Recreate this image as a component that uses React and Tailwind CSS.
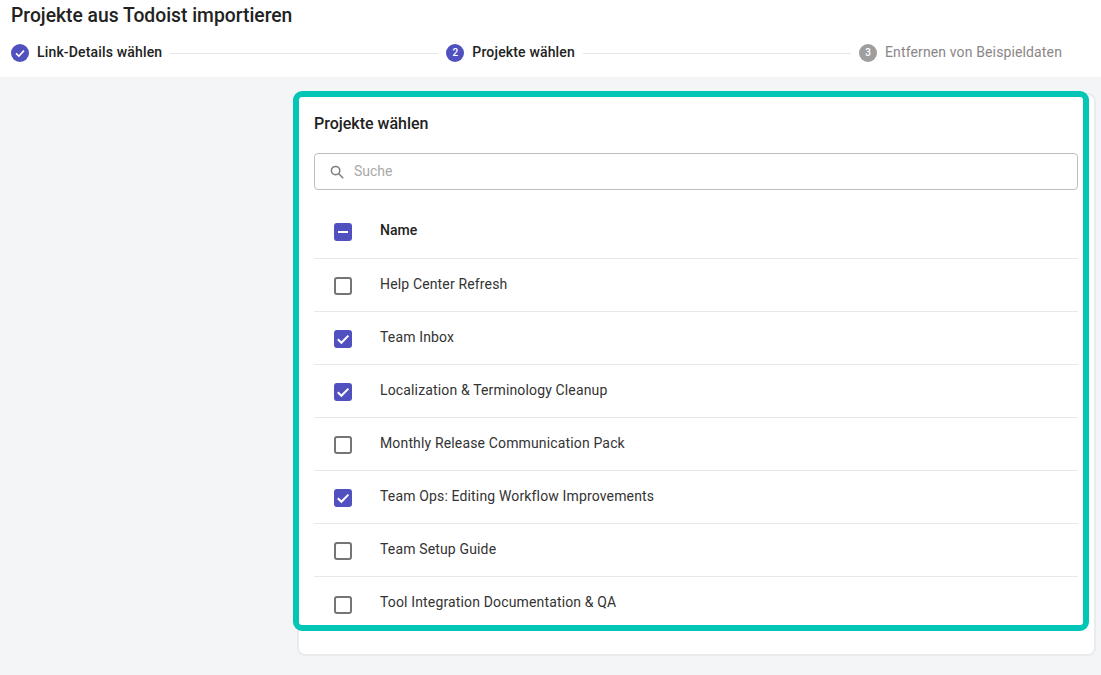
import React from "react";

function CheckMark() {
  return (
    <svg viewBox="0 0 18 18" className="w-[18px] h-[18px]" fill="none">
      <path d="M3.8 9.2 L7.4 12.8 L14.4 5.6" stroke="#fff" strokeWidth="2" />
    </svg>
  );
}

function Box({ state }) {
  if (state === "off") {
    return <span className="block w-[18px] h-[18px] rounded-[3px] border-2 border-[#757575] bg-white shrink-0 mt-[2px]" />;
  }
  return (
    <span className="flex items-center justify-center w-[18px] h-[18px] rounded-[3px] bg-[#5051bf] shrink-0 mt-[2px]">
      {state === "on" ? <CheckMark /> : <span className="block w-[10px] h-[2px] bg-white" />}
    </span>
  );
}

function Step({ icon, label, muted, bold }) {
  return (
    <div className="flex items-center gap-2 shrink-0">
      <span className={`flex items-center justify-center w-[18px] h-[18px] rounded-full text-white text-[10px] font-medium leading-none ${muted ? "bg-[#9e9e9e]" : "bg-[#5051bf]"}`}>
        {icon}
      </span>
      <span className={`text-[14px] leading-5 mb-[2px] ${muted ? "tracking-[0.13px] text-[#8a8686] font-normal" : "tracking-[0.16px] text-[#222222]"} ${bold ? "font-medium" : ""}`}>{label}</span>
    </div>
  );
}

const rows = [
  ["Help Center Refresh", "off"],
  ["Team Inbox", "on"],
  ["Localization & Terminology Cleanup", "on"],
  ["Monthly Release Communication Pack", "off"],
  ["Team Ops: Editing Workflow Improvements", "on"],
  ["Team Setup Guide", "off"],
  ["Tool Integration Documentation & QA", "off"],
];

export default function App() {
  return (
    <div className="relative w-[1101px] h-[675px] overflow-hidden bg-[#f4f5f7] font-['Roboto',sans-serif]">
      <header className="h-[77px] bg-white pl-[11px] pr-[39px] pt-[4px]">
        <h1 className="text-[19.3px] leading-[24px] font-medium text-[#222222]">Projekte aus Todoist importieren</h1>
        <div className="flex items-center gap-2 mt-[14px]">
          <Step
            bold
            label="Link-Details wählen"
            icon={
              <svg viewBox="0 0 18 18" className="w-[18px] h-[18px]" fill="none">
                <path d="M5 9.3 L7.9 12 L13 6.6" stroke="#fff" strokeWidth="1.6" />
              </svg>
            }
          />
          <div className="flex-1 h-px bg-[#e6e6e8] mt-px" />
          <Step bold label="Projekte wählen" icon="2" />
          <div className="flex-1 h-px bg-[#e6e6e8] mt-px" />
          <Step muted label="Entfernen von Beispieldaten" icon="3" />
        </div>
      </header>

      <main className="flex pl-[297px] pr-[5px] pt-[16px]">
        <section className="w-full h-[563px] bg-white rounded-lg border-2 border-[#ebebed] pl-[15px] pr-[16px]">
          <h2 className="text-[16px] leading-5 font-medium text-[#222222] mt-[19px]">Projekte wählen</h2>
          <div className="flex items-center h-[37px] mt-[19px] border border-[#bdbdbd] rounded-[4px] pl-[15px] gap-[10px]">
            <svg viewBox="0 0 14 14" className="w-[14px] h-[14px]" fill="none" stroke="#7d7d7d" strokeWidth="1.5">
              <circle cx="5.6" cy="5.6" r="4.2" />
              <path d="M8.8 8.8 L13.2 13.2" />
            </svg>
            <span className="text-[14px] text-[#a9a9a9]">Suche</span>
          </div>
          <div className="flex items-center h-[69px] pl-[20px] pt-[14px] gap-[28px] border-b border-[#e8e8ea]">
            <Box state="mixed" />
            <span className="text-[14px] font-medium text-[#222222] mb-[2px]">Name</span>
          </div>
          {rows.map(([name, state], i) => (
            <div
              key={name}
              className={`flex items-center h-[53px] pl-[20px] gap-[28px] ${i < rows.length - 1 ? "border-b border-[#e8e8ea]" : ""}`}
            >
              <Box state={state} />
              <span className="text-[14px] text-[#333333] tracking-[0.15px] mb-[2px]">{name}</span>
            </div>
          ))}
        </section>
      </main>

      <div className="absolute left-[293px] top-[91px] w-[796px] h-[540px] border-[6px] border-[#03c6b6] rounded-[9px] pointer-events-none" />
    </div>
  );
}
